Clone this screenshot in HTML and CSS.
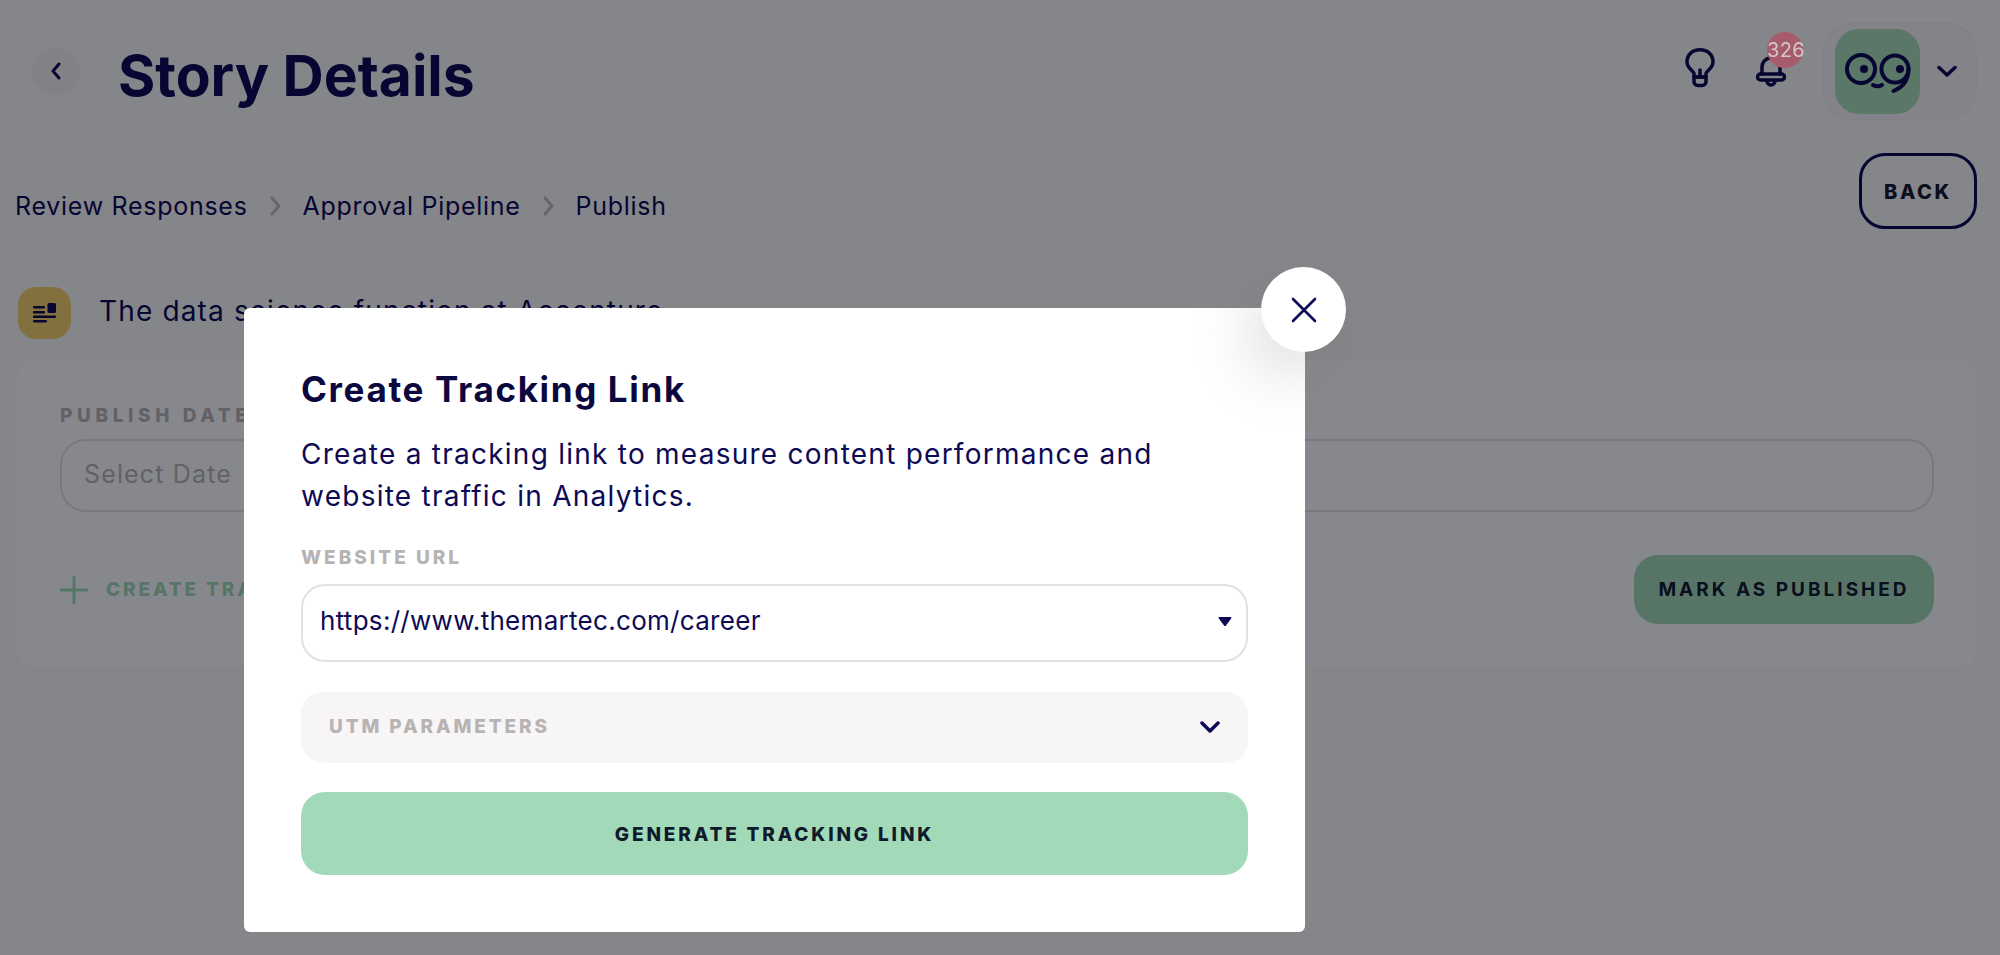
FILE: index.html
```html
<!DOCTYPE html>
<html lang="en">
<head>
<meta charset="utf-8">
<title>Story Details</title>
<link rel="stylesheet" href="styles.css">
</head>
<body>
<main class="page">
  <header class="topbar">
    <div class="title-group">
      <button class="back-circle" aria-label="Back">
        <svg width="12" height="20" viewBox="0 0 12 20" fill="none"><path d="M9 3 3 10l6 7" stroke="#0d0a55" stroke-width="3" stroke-linecap="round" stroke-linejoin="round"/></svg>
      </button>
      <h1 class="page-title">Story Details</h1>
    </div>
    <div class="top-actions">
      <svg class="bulb" width="30" height="40" viewBox="0 0 30 40" fill="none" stroke="#0d0a55" stroke-width="3.500" stroke-linecap="round" stroke-linejoin="round"><path d="M9 29v-3.500C9 23 2 20.500 2 14C2 6.500 7.500 1.800 15 1.800S28 6.500 28 14c0 6.500-7 9-7 11.500V29Z"/><path d="M15 22v7M9 29h12v4.500a4 4 0 0 1-4 4h-4a4 4 0 0 1-4-4Z"/></svg>
      <div class="bell-wrap">
        <svg width="30" height="33" viewBox="0 0 30 33" fill="none" stroke="#0d0a55" stroke-width="3.500" stroke-linecap="round" stroke-linejoin="round"><path d="M6 19V12a9 9 0 0 1 18 0v7"/><path d="M4.500 19h21a3 3 0 0 1 0 6h-21a3 3 0 0 1 0-6Z"/><path d="M11 26a4 4 0 0 0 8 0"/></svg>
        <span class="badge">326</span>
      </div>
      <div class="profile">
        <div class="avatar">
          <svg width="66" height="42" viewBox="0 0 66 42" fill="none" stroke="#0d0a55" stroke-width="4" stroke-linecap="round"><circle cx="16" cy="17" r="14"/><circle cx="19" cy="17" r="4" fill="#0d0a55" stroke="none"/><circle cx="50" cy="17" r="13.500"/><circle cx="55" cy="17" r="4" fill="#0d0a55" stroke="none"/><path d="M63.500 17c0 10-5 18-15 22M28 33c2.500 1.500 6.500 1.500 9 0"/></svg>
        </div>
        <svg width="20" height="13" viewBox="0 0 20 13" fill="none"><path d="M2 2.500 10 10l8-7.500" stroke="#0d0a55" stroke-width="3.500" stroke-linecap="round" stroke-linejoin="round"/></svg>
      </div>
    </div>
  </header>

  <section class="toolbar">
    <nav class="crumbs">
      <span>Review Responses</span>
      <svg class="crumb-sep" width="11" height="20" viewBox="0 0 11 20" fill="none"><path d="m2 2 7 8-7 8" stroke="#bcbcc0" stroke-width="3" stroke-linecap="round" stroke-linejoin="round"/></svg>
      <span>Approval Pipeline</span>
      <svg class="crumb-sep" width="11" height="20" viewBox="0 0 11 20" fill="none"><path d="m2 2 7 8-7 8" stroke="#bcbcc0" stroke-width="3" stroke-linecap="round" stroke-linejoin="round"/></svg>
      <span>Publish</span>
    </nav>
    <button class="btn-back">BACK</button>
  </section>

  <section class="story-row">
    <div class="story-icon">
      <svg width="24" height="22" viewBox="0 0 24 22" fill="#0d0a55"><rect x="0" y="4" width="12" height="2.500" rx="1"/><rect x="0" y="9" width="12" height="2.500" rx="1"/><rect x="0" y="13.500" width="23" height="2.500" rx="1"/><rect x="0" y="18" width="14" height="2.500" rx="1"/><rect x="14.500" y="1" width="8.500" height="10" rx="1.500"/></svg>
    </div>
    <p class="story-text">The data science function at Accenture</p>
  </section>

  <section class="card">
    <div class="field-label">PUBLISH DATE</div>
    <div class="date-input">Select Date</div>
    <div class="card-actions">
      <div class="create-link">
        <svg width="28" height="28" viewBox="0 0 28 28" fill="none"><path d="M14 1v26M1 14h26" stroke="#a2d9b8" stroke-width="3" stroke-linecap="round"/></svg>
        <span>CREATE TRACKING LINK</span>
      </div>
      <button class="btn-publish">MARK AS PUBLISHED</button>
    </div>
  </section>
</main>

<div class="overlay">
  <div class="modal">
    <button class="close" aria-label="Close">
      <svg width="26" height="26" viewBox="0 0 26 26" fill="none"><path d="m2 2 22 22M24 2 2 24" stroke="#0d0a55" stroke-width="2.600" stroke-linecap="round"/></svg>
    </button>
    <h2 class="modal-title">Create Tracking Link</h2>
    <p class="modal-desc">Create a tracking link to measure content performance and website traffic in Analytics.</p>
    <div class="modal-label">WEBSITE URL</div>
    <div class="url-select">
      <span>https://www.themartec.com/career</span>
      <svg class="caret" width="14" height="11" viewBox="0 0 14 11"><path d="M1.500 1h11c.800 0 1.200.800.700 1.500L8 9.500c-.500.700-1.500.700-2 0L.800 2.500C.300 1.800.700 1 1.500 1Z" fill="#0d0a55"/></svg>
    </div>
    <div class="utm">
      <span>UTM PARAMETERS</span>
      <svg width="20" height="12" viewBox="0 0 20 12" fill="none"><path d="M2 2l8 8 8-8" stroke="#0d0a55" stroke-width="3.500" stroke-linecap="round" stroke-linejoin="round"/></svg>
    </div>
    <button class="btn-generate">GENERATE TRACKING LINK</button>
  </div>
</div>
</body>
</html>
```
FILE: styles.css
```css
* { box-sizing: border-box; }
html, body { margin: 0; height: 100%; overflow: hidden; }
body {
  background: #f5f8f8;
  color: #0d0a55;
  font-family: Inter, "Liberation Sans", sans-serif;
}
button { font-family: inherit; border: 0; padding: 0; cursor: pointer; }
h1, h2, p { margin: 0; }

.page { display: flex; flex-direction: column; height: 955px; }

.topbar {
  display: flex;
  align-items: center;
  justify-content: space-between;
  padding: 22px 23px 0 32px;
}
.title-group { display: flex; align-items: center; gap: 38px; }
.back-circle {
  width: 48px; height: 48px; border-radius: 50%;
  background: #eeeff1;
  display: flex; align-items: center; justify-content: center;
}
.page-title { font-size: 57px; line-height: 66px; font-weight: 700; letter-spacing: 0; color: #0d0a55; position: relative; top: 5px; }

.top-actions { display: flex; align-items: center; }
.bulb { margin-right: 41px; position: relative; top: -3px; }
.bell-wrap { position: relative; width: 30px; height: 33px; margin-right: 36px; }
.badge {
  position: absolute; z-index: 2; left: 11px; top: -23px;
  width: 36px; height: 36px; border-radius: 50%;
  background: #a85c6b;
  color: #d0c8cc;
  font-size: 20px; line-height: 36px; text-align: center;
  letter-spacing: .3px;
}
.profile {
  display: flex; align-items: center; gap: 17px;
  width: 155px; height: 98px;
  padding-left: 11px;
  border: 2px solid #eeeff0;
  border-radius: 32px;
  background: #f2f3f5;
}
.avatar {
  width: 85px; height: 85px; border-radius: 24px;
  background: #a6dcba;
  display: flex; align-items: center; justify-content: center;
  padding-top: 4px;
}

.toolbar {
  display: flex; align-items: flex-end; justify-content: space-between;
  margin-top: 33px; padding: 0 23px 0 15px;
}
.crumbs {
  display: flex; align-items: center; gap: 22px;
  font-size: 25px; line-height: 32px; padding-bottom: 7px;
  letter-spacing: .72px;
  color: #0d0a55;
}
.crumb-sep { flex: none; }
.btn-back {
  width: 118px; height: 76px; border-radius: 26px;
  border: 3px solid #0d0a55; background: transparent;
  padding-top: 2px;
  font-size: 20px; font-weight: 800; letter-spacing: 2.600px; color: #141a30;
}

.story-row { display: flex; align-items: center; gap: 28px; margin-top: 58px; padding-left: 18px; height: 52px; }
.story-icon {
  width: 53px; height: 52px; border-radius: 18px;
  background: #f3cf6e;
  display: flex; align-items: center; justify-content: center;
}
.story-text { font-size: 28px; line-height: 36px; letter-spacing: 1.150px; padding-bottom: 4px; }

.card {
  margin: 21px 24px 0 18px;
  height: 307px;
  padding: 44px 42px 43px;
  border-radius: 16px;
  background: #f9fcfe;
}
.field-label { font-size: 19px; line-height: 23px; font-weight: 800; letter-spacing: 4.600px; color: #b8b3b6; }
.date-input {
  margin-top: 12px; height: 73px;
  border: 2px solid #e0dee0; border-radius: 26px;
  padding: 0 0 4px 22px;
  display: flex; align-items: center;
  font-size: 25px; letter-spacing: 1.150px; color: #b5b3b6;
}
.card-actions { display: flex; align-items: center; justify-content: space-between; margin-top: 43px; }
.create-link { display: flex; align-items: center; gap: 18px; font-size: 19px; font-weight: 800; letter-spacing: 2.900px; color: #a2d9b8; }
.btn-publish {
  width: 300px; height: 69px; border-radius: 24px;
  background: #a2d9b8;
  font-size: 19px; font-weight: 700; letter-spacing: 3px; color: #141a30;
}

.overlay {
  position: fixed; inset: 0;
  background: rgba(0, 0, 8, .46);
  padding: 308px 0 0 244px;
}
.modal {
  position: relative;
  width: 1061px; height: 624px;
  padding: 59px 57px 57px;
  background: #fff;
  border-radius: 6px;
}
.close {
  position: absolute; left: 1017px; top: -41px;
  width: 85px; height: 85px; border-radius: 50%;
  background: #fff;
  box-shadow: -12px 22px 60px rgba(110, 100, 100, .22);
  display: flex; align-items: center; justify-content: center;
}
.modal-title { font-size: 35px; line-height: 44px; font-weight: 700; color: #0b0840; letter-spacing: 1.650px; }
.modal-desc { margin-top: 22px; font-size: 28px; line-height: 42px; letter-spacing: 1.250px; color: #0d0a55; }
.modal-label { margin-top: 29px; font-size: 19px; line-height: 24px; font-weight: 800; letter-spacing: 3px; color: #b8b3b3; }
.url-select {
  margin-top: 14px; height: 78px;
  border: 2px solid #e3e0e0; border-radius: 24px;
  padding: 0 14px 6px 17px;
  display: flex; align-items: center; justify-content: space-between;
  font-size: 26px; letter-spacing: .3px;
}
.caret { margin-top: 3px; }
.utm {
  margin-top: 30px; height: 71px;
  border-radius: 22px; background: #f7f5f6;
  padding: 0 28px 2px;
  display: flex; align-items: center; justify-content: space-between;
  font-size: 19px; font-weight: 800; letter-spacing: 2.900px; color: #b8b3b3;
}
.btn-generate {
  display: block; width: 100%; margin-top: 29px; height: 83px;
  border-radius: 24px; background: #a2d9b8;
  padding-top: 2px;
  font-size: 19px; font-weight: 800; letter-spacing: 2.850px; color: #0f1a2a;
}
```
